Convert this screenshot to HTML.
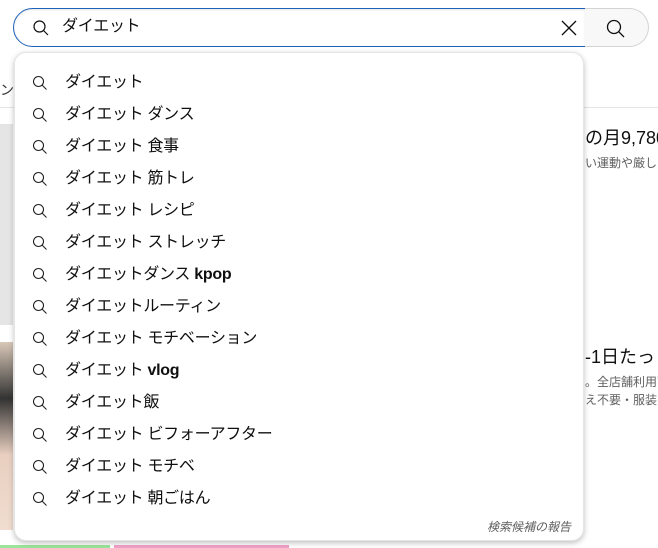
<!DOCTYPE html>
<html><head><meta charset="utf-8"><style>
*{margin:0;padding:0;box-sizing:border-box}
body{width:658px;height:548px;overflow:hidden;background:#fff;font-family:"Liberation Sans","Noto Sans CJK JP",sans-serif;position:relative;color:#0f0f0f}
.abs{position:absolute}
.box{left:13px;top:8px;width:573px;height:39px;border:1px solid #1c62b9;border-radius:20px 0 0 20px;box-shadow:inset 0 1px 2px rgba(0,0,0,.1)}
.btn{left:585px;top:8px;width:64px;height:39px;border:1px solid #d3d3d3;border-left:none;border-radius:0 20px 20px 0;background:#f8f8f8}
.dd{left:14px;top:52px;width:570px;height:489px;background:#fff;border-radius:12px;box-shadow:0 2px 6px rgba(0,0,0,.25);border:1px solid #e5e5e5}
.it{position:absolute;left:0;height:32px;width:100%;font-size:16px;line-height:32px;letter-spacing:-0.3px}
.it svg{position:absolute;left:17px;top:9px}
.it span{position:absolute;left:50px;top:1px}
b{font-weight:bold}
</style></head><body>
<div class="abs" style="left:0;top:107px;width:658px;height:1px;background:#e5e5e5"></div>
<div class="abs" style="left:0;top:124px;width:13px;height:201px;background:#e5e5e5"></div>
<div class="abs" style="left:0;top:342px;width:13px;height:188px;background:linear-gradient(#d9c8b8,#333 30%,#e8cfc0 60%,#f0ddd0)"></div>
<div class="abs" style="left:0;top:545px;width:110px;height:3px;background:#9be59b"></div>
<div class="abs" style="left:114px;top:545px;width:175px;height:3px;background:#f2a0c8"></div>
<div class="abs" style="left:0;top:80px;font-size:14px;color:#333">ン</div>
<div class="abs" style="left:585px;top:124px;font-size:18px;white-space:nowrap">の月9,780</div>
<div class="abs" style="left:585px;top:154px;font-size:12px;color:#606060;white-space:nowrap">い運動や厳しい</div>
<div class="abs" style="left:585px;top:343px;font-size:18px;white-space:nowrap">-1日たっ</div>
<div class="abs" style="left:585px;top:373px;font-size:12px;color:#606060;white-space:nowrap">。全店舗利用可</div>
<div class="abs" style="left:585px;top:391px;font-size:12px;color:#606060;white-space:nowrap">え不要・服装</div>
<div class="abs box">
<svg class="abs" style="left:18px;top:10px" width="18" height="18" viewBox="0 0 18 18"><circle cx="7.5" cy="7.5" r="5.5" fill="none" stroke="#0f0f0f" stroke-width="1.2"/><path d="M11.5 11.5L16 16" stroke="#0f0f0f" stroke-width="1.2"/></svg>
<div class="abs" style="left:48px;top:6px;font-size:16px;line-height:24px;letter-spacing:-0.3px">ダイエット</div>
<svg class="abs" style="left:546px;top:10px" width="18" height="18" viewBox="0 0 18 18"><path d="M2 2L16 16M16 2L2 16" stroke="#0f0f0f" stroke-width="1.3"/></svg>
</div>
<div class="abs btn"><svg class="abs" style="left:20px;top:9px" width="22" height="22" viewBox="0 0 22 22"><circle cx="9" cy="9" r="6.5" fill="none" stroke="#0f0f0f" stroke-width="1.3"/><path d="M13.7 13.7L19 19" stroke="#0f0f0f" stroke-width="1.3"/></svg></div>
<div class="abs dd">
<div class="it" style="top:13px"><svg width="16" height="16" viewBox="0 0 16 16"><circle cx="6.5" cy="6.5" r="5" fill="none" stroke="#222" stroke-width="1.1"/><path d="M10 10L14.5 14.5" stroke="#222" stroke-width="1.1"/></svg><span>ダイエット</span></div>
<div class="it" style="top:45px"><svg width="16" height="16" viewBox="0 0 16 16"><circle cx="6.5" cy="6.5" r="5" fill="none" stroke="#222" stroke-width="1.1"/><path d="M10 10L14.5 14.5" stroke="#222" stroke-width="1.1"/></svg><span>ダイエット ダンス</span></div>
<div class="it" style="top:77px"><svg width="16" height="16" viewBox="0 0 16 16"><circle cx="6.5" cy="6.5" r="5" fill="none" stroke="#222" stroke-width="1.1"/><path d="M10 10L14.5 14.5" stroke="#222" stroke-width="1.1"/></svg><span>ダイエット 食事</span></div>
<div class="it" style="top:109px"><svg width="16" height="16" viewBox="0 0 16 16"><circle cx="6.5" cy="6.5" r="5" fill="none" stroke="#222" stroke-width="1.1"/><path d="M10 10L14.5 14.5" stroke="#222" stroke-width="1.1"/></svg><span>ダイエット 筋トレ</span></div>
<div class="it" style="top:141px"><svg width="16" height="16" viewBox="0 0 16 16"><circle cx="6.5" cy="6.5" r="5" fill="none" stroke="#222" stroke-width="1.1"/><path d="M10 10L14.5 14.5" stroke="#222" stroke-width="1.1"/></svg><span>ダイエット レシピ</span></div>
<div class="it" style="top:173px"><svg width="16" height="16" viewBox="0 0 16 16"><circle cx="6.5" cy="6.5" r="5" fill="none" stroke="#222" stroke-width="1.1"/><path d="M10 10L14.5 14.5" stroke="#222" stroke-width="1.1"/></svg><span>ダイエット ストレッチ</span></div>
<div class="it" style="top:205px"><svg width="16" height="16" viewBox="0 0 16 16"><circle cx="6.5" cy="6.5" r="5" fill="none" stroke="#222" stroke-width="1.1"/><path d="M10 10L14.5 14.5" stroke="#222" stroke-width="1.1"/></svg><span>ダイエットダンス <b>kpop</b></span></div>
<div class="it" style="top:237px"><svg width="16" height="16" viewBox="0 0 16 16"><circle cx="6.5" cy="6.5" r="5" fill="none" stroke="#222" stroke-width="1.1"/><path d="M10 10L14.5 14.5" stroke="#222" stroke-width="1.1"/></svg><span>ダイエットルーティン</span></div>
<div class="it" style="top:269px"><svg width="16" height="16" viewBox="0 0 16 16"><circle cx="6.5" cy="6.5" r="5" fill="none" stroke="#222" stroke-width="1.1"/><path d="M10 10L14.5 14.5" stroke="#222" stroke-width="1.1"/></svg><span>ダイエット モチベーション</span></div>
<div class="it" style="top:301px"><svg width="16" height="16" viewBox="0 0 16 16"><circle cx="6.5" cy="6.5" r="5" fill="none" stroke="#222" stroke-width="1.1"/><path d="M10 10L14.5 14.5" stroke="#222" stroke-width="1.1"/></svg><span>ダイエット <b>vlog</b></span></div>
<div class="it" style="top:333px"><svg width="16" height="16" viewBox="0 0 16 16"><circle cx="6.5" cy="6.5" r="5" fill="none" stroke="#222" stroke-width="1.1"/><path d="M10 10L14.5 14.5" stroke="#222" stroke-width="1.1"/></svg><span>ダイエット飯</span></div>
<div class="it" style="top:365px"><svg width="16" height="16" viewBox="0 0 16 16"><circle cx="6.5" cy="6.5" r="5" fill="none" stroke="#222" stroke-width="1.1"/><path d="M10 10L14.5 14.5" stroke="#222" stroke-width="1.1"/></svg><span>ダイエット ビフォーアフター</span></div>
<div class="it" style="top:397px"><svg width="16" height="16" viewBox="0 0 16 16"><circle cx="6.5" cy="6.5" r="5" fill="none" stroke="#222" stroke-width="1.1"/><path d="M10 10L14.5 14.5" stroke="#222" stroke-width="1.1"/></svg><span>ダイエット モチベ</span></div>
<div class="it" style="top:429px"><svg width="16" height="16" viewBox="0 0 16 16"><circle cx="6.5" cy="6.5" r="5" fill="none" stroke="#222" stroke-width="1.1"/><path d="M10 10L14.5 14.5" stroke="#222" stroke-width="1.1"/></svg><span>ダイエット 朝ごはん</span></div>
<div class="abs" style="right:12px;top:465px;font-size:12px;font-style:italic;color:#606060">検索候補の報告</div>
</div>
</body></html>
